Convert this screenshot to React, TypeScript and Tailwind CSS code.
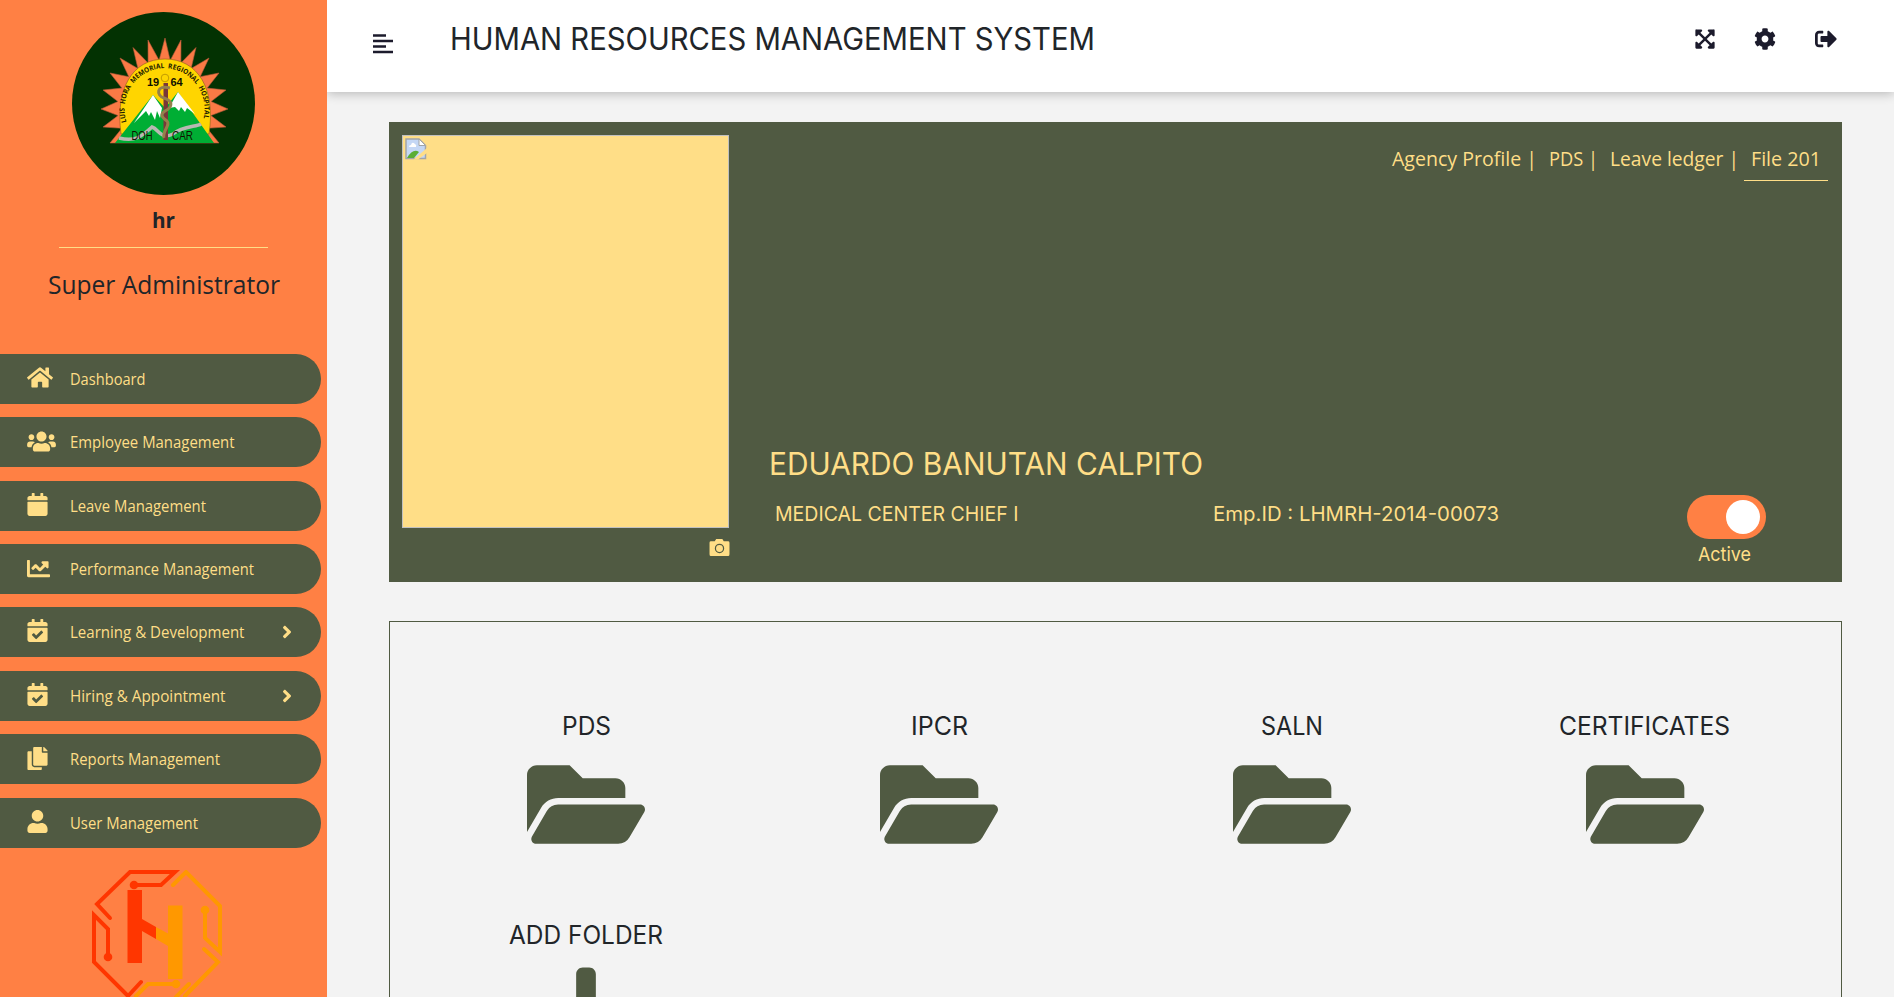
import type { ReactNode } from "react";
import { FaHome, FaUsers, FaCalendar, FaChartLine, FaCalendarCheck, FaCopy, FaUser, FaAngleRight, FaExpandArrowsAlt, FaCog, FaSignOutAlt, FaFolderOpen, FaPlus } from "react-icons/fa";

type FitProps = { children: string; w: number; size: number; h: number; font?: string; weight?: number; color: string; base: number };

/* Single line label set to a fixed measure. */
function Fit({ children, w, size, h, font = "Inter", weight = 400, color, base }: FitProps) {
  return (
    <svg width={w} height={h} className="block shrink-0 overflow-visible" style={{ fontFamily: `"${font}", sans-serif` }}>
      <text x="0" y={base} textLength={w} lengthAdjust="spacingAndGlyphs" fontSize={size} fontWeight={weight} fill={color}>{children}</text>
    </svg>
  );
}

const menu: { icon: ReactNode; label: string; w: number; more?: boolean }[] = [
  { icon: <FaHome className="h-[23px] w-[26px]" />, label: "Dashboard", w: 75.5 },
  { icon: <FaUsers className="mt-px h-[23px] w-[29px]" />, label: "Employee Management", w: 164.5 },
  { icon: <FaCalendar className="h-[23px] w-[21px]" />, label: "Leave Management", w: 136 },
  { icon: <FaChartLine className="mt-px h-[23px] w-[23px]" />, label: "Performance Management", w: 184 },
  { icon: <FaCalendarCheck className="h-[23px] w-[21px]" />, label: "Learning & Development", w: 174.5, more: true },
  { icon: <FaCalendarCheck className="h-[23px] w-[21px]" />, label: "Hiring & Appointment", w: 155.5, more: true },
  { icon: <FaCopy className="mt-px h-[23px] w-[21px]" />, label: "Reports Management", w: 150 },
  { icon: <FaUser className="h-[23px] w-[21px]" />, label: "User Management", w: 128 },
];

const tips = [[38, 131], [31, 115], [29, 97], [31, 78], [38, 61], [48, 46], [61, 35.5], [76, 28], [93, 26], [109, 28], [124, 35.5], [137, 46], [147, 61], [154, 78], [156, 97], [154, 115], [147, 131]];
const rays = "M" + tips.map(([x, y], i) => {
  if (i === tips.length - 1) return `${x} ${y}`;
  const [nx, ny] = tips[i + 1];
  const a = Math.atan2((y + ny) / 2 - 96, (x + nx) / 2 - 92.5);
  return `${x} ${y}L${(92.5 + 47 * Math.cos(a)).toFixed(1)} ${(96 + 48 * Math.sin(a)).toFixed(1)}`;
}).join("L") + "Z";

function Emblem() {
  return (
    <svg width="183" height="183" viewBox="0 0 183 183" className="block">
      <circle cx="91.500" cy="91.500" r="91.500" fill="#033202" />
      <path d={rays} fill="#fa7a45" stroke="#b5583a" strokeWidth=".6" />
      <path d="M49 122C43 77 60 47 93 47S144 77 137 122Z" fill="#ffd500" stroke="#8b5a20" strokeWidth=".6" />
      <path d="M43 131L81 83L93 96L106 80L142 131Z" fill="#00ae34" />
      <path d="M62 111L81 83L90 96L88 106L85 99L83 108L79 100L77 104L74 99ZM97 96L106 80L123 102L115 96L113 100L109 95L107 99L103 95Z" fill="#fff" />
      <path d="M47 126C63 130 69 125 80 115C87 117 88 128 101 122C111 114 124 115 129 112" fill="none" stroke="#b8b8b2" strokeWidth="3.500" />
      <rect x="91.500" y="71" width="4.500" height="57" fill="#783838" />
      <circle cx="93" cy="66" r="3.800" fill="#ffd500" stroke="#c39c00" />
      <path d="M98 76C84 72 84 84 92 86C101 89 101 95 93 99C87 103 91 106 95 109C99 113 90 119 92 126" fill="none" stroke="#94804b" strokeWidth="3" />
      <g fontFamily="Liberation Sans" fill="#101000">
        <text x="75" y="74" fontSize="11" fontWeight="700">19</text>
        <text x="98.500" y="74" fontSize="11" fontWeight="700">64</text>
        <text x="59.500" y="127.500" fontSize="13" textLength="21" lengthAdjust="spacingAndGlyphs">DOH</text>
        <text x="100" y="127.500" fontSize="13" textLength="21" lengthAdjust="spacingAndGlyphs">CAR</text>
      </g>
      <path id="arch" d="M54.500 110A40 41 0 1 1 130.500 110" fill="none" />
      <text fontFamily="Open Sans" fontSize="7" fontWeight="700" fill="#1b1900" wordSpacing="2"><textPath href="#arch" textLength="149" lengthAdjust="spacingAndGlyphs">LUIS HORA MEMORIAL REGIONAL HOSPITAL</textPath></text>
    </svg>
  );
}

function HLogo() {
  return (
    <svg width="132" height="132" viewBox="0 0 132 132" className="block">
      <g fill="none" strokeWidth="4" stroke="#ff3600" strokeLinecap="round">
        <path d="M18 48L5 34L38 2H83L69 15H42" />
        <path d="M16 87V59L2 45V92L36 126L49 112" />
      </g>
      <g fill="none" strokeWidth="4" stroke="#ff9800" strokeLinecap="round">
        <path d="M81 15L94 2L128 36V82L113 68V41" />
        <path d="M112 79L126 92L93 126M97 114L84 127M84 114H56L44 126" />
      </g>
      <g fill="#ff3600"><circle cx="42" cy="15" r="4.300" /><circle cx="16" cy="87" r="4.300" /><path d="M35.500 20H50V49L64 57V69L50 61V93H35.500Z" /></g>
      <g fill="#ff9800"><circle cx="113" cy="40" r="4.300" /><circle cx="84" cy="114" r="4.300" /><path d="M64 57L76 63.500V35.500H90.500V109H76V76L64 69Z" /></g>
    </svg>
  );
}

function Sidebar() {
  return (
    <aside className="z-20 flex h-full w-[327px] shrink-0 flex-col overflow-hidden bg-[#ff8044]">
      <div className="flex h-[354px] shrink-0 flex-col items-center pt-3">
        <Emblem />
        <div className="h-[52px] pt-[9px]"><Fit w={23} size={22} h={30} font="Open Sans" weight={700} color="#212529" base={24}>hr</Fit></div>
        <div className="h-px w-[209px] bg-[#ffde87]" />
        <div className="pt-[17px]"><Fit w={232} size={25.5} h={40} font="Open Sans" color="#212529" base={29}>Super Administrator</Fit></div>
      </div>
      <nav className="flex shrink-0 flex-col gap-[13.360px]">
        {menu.map((m) => (
          <div key={m.label} className="flex h-[50px] w-[321px] items-center rounded-r-full bg-[#505a42] pr-[29px] text-[#ffde87]">
            <div className="flex w-[69.5px] pb-[3px] pl-[27px]">{m.icon}</div>
            <div className="flex-1"><Fit w={m.w} size={15.5} h={20} font="Open Sans" color="#ffde87" base={16}>{m.label}</Fit></div>
            {m.more && <FaAngleRight className="h-[20px] w-[10px]" />}
          </div>
        ))}
      </nav>
      <div className="pl-[92px] pt-[22px]"><HLogo /></div>
    </aside>
  );
}

function Header() {
  return (
    <header className="relative z-10 flex h-[92px] shrink-0 items-start bg-white pl-[45px] shadow-[0_2px_10px_rgba(0,0,0,0.240)]">
      <svg width="22" height="22" viewBox="0 0 22 22" className="mt-[33px] block"><path d="M1 2.500H14M1 8H21M1 13.500H14M1 19H21" stroke="#1c1b2c" strokeWidth="2.400" /></svg>
      <div className="ml-[56px] mt-[18px]"><Fit w={645} size={30.5} h={42} color="#212529" base={32}>HUMAN RESOURCES MANAGEMENT SYSTEM</Fit></div>
      <div className="ml-auto mr-[57px] mt-[28px] flex items-center text-[#1c1b2c]">
        <FaExpandArrowsAlt className="mr-[39px] h-[22px] w-[20px]" />
        <FaCog className="mr-[39px] h-[22px] w-[22px]" />
        <FaSignOutAlt className="h-[22px] w-[22px]" />
      </div>
    </header>
  );
}

function BrokenImage() {
  return (
    <svg width="22" height="22" viewBox="0 0 22 22" className="ml-px mt-px block">
      <path d="M1 1H14L20.500 7.500V20.500H1Z" fill="#c4d7f5" stroke="#a2a5a8" strokeWidth="1.500" />
      <path d="M14 1V7.500H20.500Z" fill="#fff" stroke="#a2a5a8" />
      <path d="M4 9Q4 7 6 7Q7 3 10 6Q12 7 11 9Z" fill="#fff" />
      <path d="M2 20Q8 10 14 14L9 20Z" fill="#5bae35" />
      <path d="M22 10L8.500 21.500H13L22 15Z" fill="#ffde87" />
    </svg>
  );
}

function Profile() {
  const y = "#ffde87";
  return (
    <section className="flex h-[460px] shrink-0 bg-[#505a42]">
      <div className="w-[379.5px] shrink-0 pl-[13px] pt-[13px]">
        <div className="h-[393px] w-[327px] border border-[#c0c0c0] bg-[#ffde87] p-px"><BrokenImage /></div>
        <svg width="21" height="19" viewBox="0 0 22 20" className="ml-[307px] mt-[10px] block"><path d="M2 3.500H6L7.500 1H14L15.500 3.500H20Q21.500 3.500 21.500 5V17Q21.500 19 20 19H2Q.5 19 .5 17V5Q.5 3.500 2 3.500Z" fill={y} /><circle cx="11" cy="11" r="4.300" fill="none" stroke="#505a42" strokeWidth="1.300" /></svg>
      </div>
      <div className="flex flex-1 flex-col">
        <div className="flex h-[60px] items-start justify-end pr-[14px] pt-[22px]">
          <div className="mr-[12px]"><Fit w={145} size={20.5} h={30} font="Open Sans" color={y} base={22}>Agency Profile |</Fit></div>
          <div className="mr-[12px]"><Fit w={49} size={20.5} h={30} font="Open Sans" color={y} base={22}>PDS |</Fit></div>
          <div className="mr-[5px]"><Fit w={129} size={20.5} h={30} font="Open Sans" color={y} base={22}>Leave ledger |</Fit></div>
          <div className="flex h-[37px] w-[84px] border-b border-[#ffde87] pl-[7px]"><Fit w={70} size={20.5} h={30} font="Open Sans" color={y} base={22}>File 201</Fit></div>
        </div>
        <div className="mt-auto pb-[13px]">
          <Fit w={434} size={30.5} h={52} color={y} base={32}>EDUARDO BANUTAN CALPITO</Fit>
          <div className="flex h-[74px] items-start pl-[6px]">
            <div className="w-[438px] pt-[7px]"><Fit w={243.5} size={20} h={30} color={y} base={18.5}>MEDICAL CENTER CHIEF I</Fit></div>
            <div className="w-[474.5px] pt-[7px]"><Fit w={286} size={20} h={30} color={y} base={18.5}>Emp.ID : LHMRH-2014-00073</Fit></div>
            <div className="flex w-[79px] flex-col items-center">
              <div className="flex h-[44px] w-[79px] items-center justify-end rounded-full bg-[#ff8044] pr-[6px]"><div className="size-[34px] rounded-full bg-white" /></div>
              <div className="pr-[5px]"><Fit w={53} size={19} h={28} color={y} base={22}>Active</Fit></div>
            </div>
          </div>
        </div>
      </div>
    </section>
  );
}

const folders = [["PDS", 49], ["IPCR", 57], ["SALN", 62], ["CERTIFICATES", 171]] as const;

function Folders() {
  return (
    <section className="mt-[39px] grid h-[600px] shrink-0 grid-cols-4 content-start border border-[#505a42] px-[20px] pt-[88px] text-[#505a42]">
      {folders.map(([label, w]) => (
        <div key={label} className="flex h-[209px] flex-col items-center">
          <Fit w={w} size={25.5} h={42} color="#212529" base={25}>{label}</Fit>
          <FaFolderOpen className="h-[105px] w-[118px]" />
        </div>
      ))}
      <div className="flex flex-col items-center">
        <Fit w={154} size={25.5} h={42} color="#212529" base={25}>ADD FOLDER</Fit>
        <FaPlus className="h-[105px] w-[92px]" />
      </div>
    </section>
  );
}

export default function App() {
  return (
    <div className="flex h-[997px] w-[1894px] overflow-hidden bg-[#f3f3f3]">
      <Sidebar />
      <div className="flex min-w-0 flex-1 flex-col">
        <Header />
        <main className="flex min-h-0 flex-1 flex-col overflow-hidden pl-[62px] pr-[52px] pt-[30px]">
          <Profile />
          <Folders />
        </main>
      </div>
    </div>
  );
}
